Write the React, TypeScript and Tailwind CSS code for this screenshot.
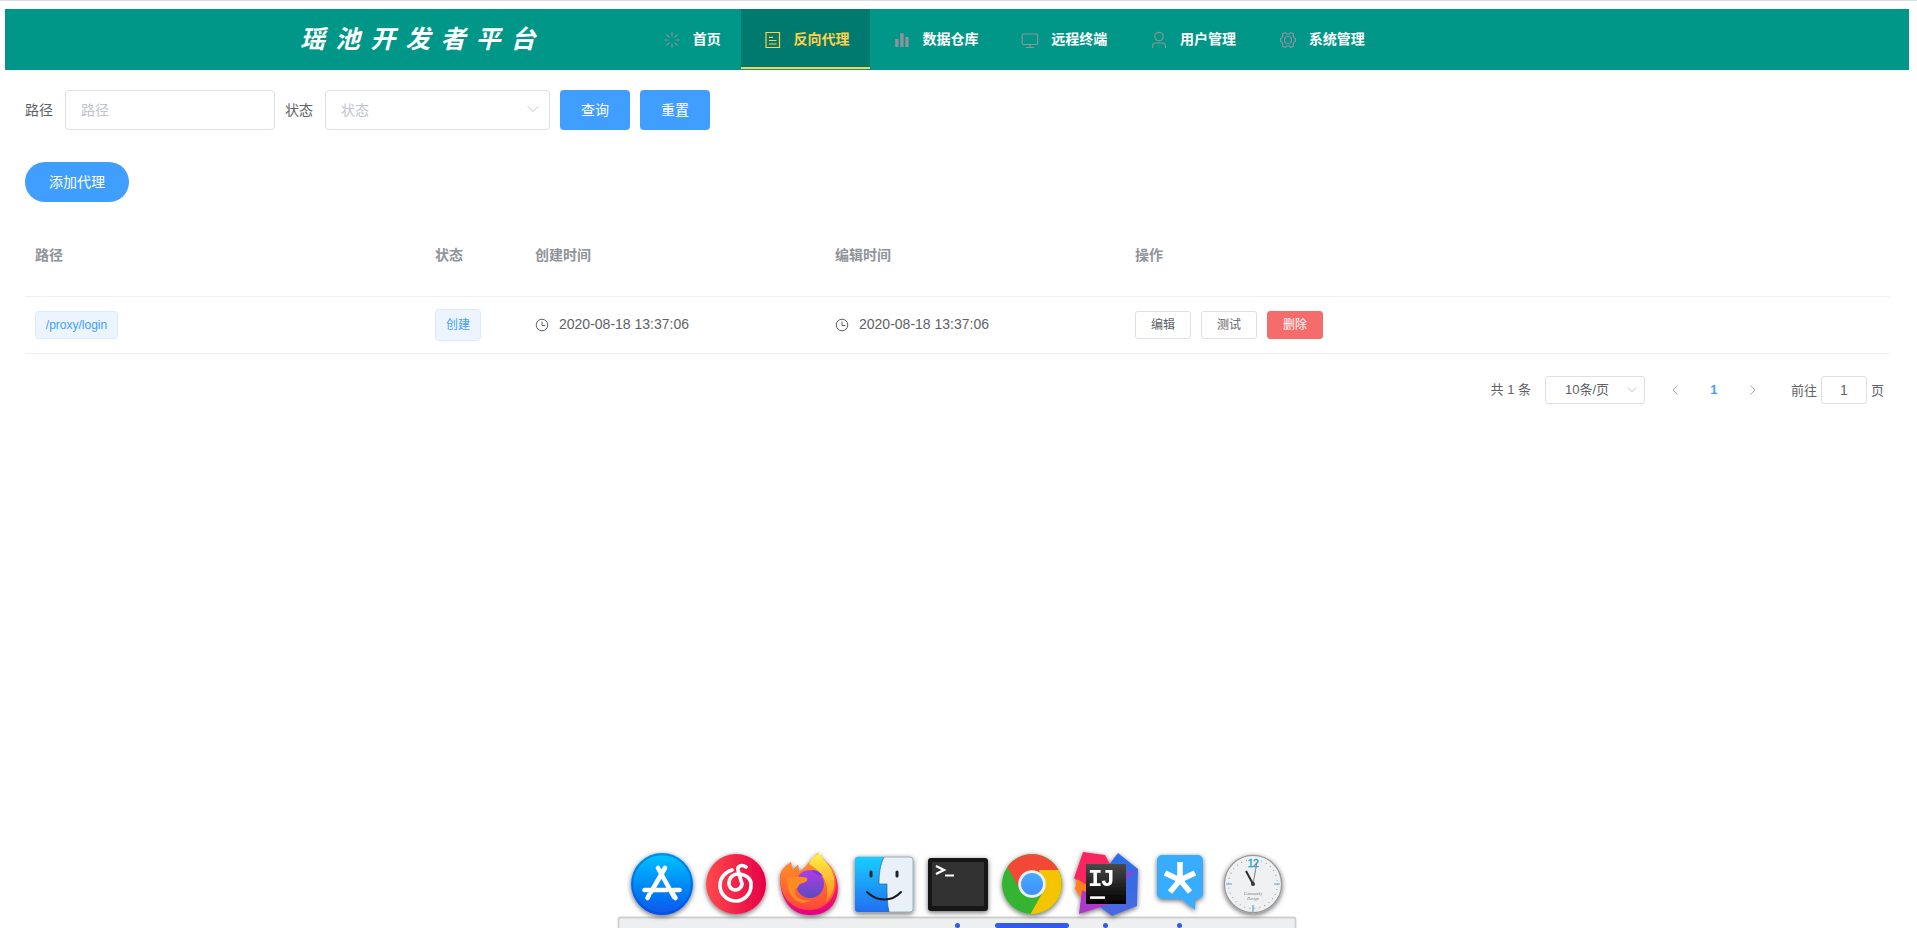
import type { ReactNode } from "react";

const Loading = () => (
  <svg viewBox="0 0 1024 1024" className="h-[18px] w-[18px]" fill="none" stroke="currentColor" strokeWidth="68" strokeLinecap="round">
    <path d="M512 95v190M512 738v190M95 512h190M738 512h190M217 217l135 135M672 672l135 135M217 807l135-135M672 352l135-135" />
  </svg>
);
const Tickets = () => (
  <svg viewBox="0 0 18 18" className="h-[18px] w-[18px]" fill="none" stroke="currentColor" strokeWidth="1.2">
    <path d="M2 1.500h13.500v15H2zM5 6.400h4M5 9.500h7.500M5 13h7.500" />
  </svg>
);
const Bars = () => (
  <svg viewBox="0 0 18 18" className="h-[18px] w-[18px]" fill="currentColor">
    <path d="M2.2 8h3.3v8H2.200zM7.200 2.200h3.400V16H7.200zM12.300 6h3.300v10h-3.300z" />
  </svg>
);
const Monitor = () => (
  <svg viewBox="0 0 18 18" className="h-[18px] w-[18px]" fill="none" stroke="currentColor" strokeWidth="1.2">
    <rect x="1.2" y="3" width="15.500" height="10.500" rx="1.6" />
    <path d="M9 13.500v3M4.800 16.500h8.400" />
  </svg>
);
const User = () => (
  <svg viewBox="0 0 18 18" className="h-[18px] w-[18px]" fill="none" stroke="currentColor" strokeWidth="1.2">
    <circle cx="9" cy="5.600" r="4.200" />
    <path d="M2.600 17v-2.200a2.800 2.800 0 0 1 2.800-2.800h7.200a2.800 2.800 0 0 1 2.800 2.800V17" />
  </svg>
);
const Gear = () => (
  <svg viewBox="0 0 18 18" className="h-[18px] w-[18px]" fill="none" stroke="currentColor" strokeWidth="1.2" strokeLinejoin="round">
    <circle cx="9" cy="9" r="3.500" />
    <path d="M6.200 1.600a3.400 3.400 0 0 0 5.600 0l2.600 1.500a3.400 3.400 0 0 0 2.100 4.400v3a3.400 3.400 0 0 0-2.100 4.400l-2.600 1.500a3.400 3.400 0 0 0-5.600 0l-2.600-1.500a3.400 3.400 0 0 0-2.100-4.400v-3a3.400 3.400 0 0 0 2.100-4.400z" />
  </svg>
);
const Clock = () => (
  <svg viewBox="0 0 14 14" className="h-[14px] w-[14px]" fill="none" stroke="currentColor" strokeWidth="1">
    <circle cx="7" cy="7" r="5.800" />
    <path d="M7 3.500v4h3.300" />
  </svg>
);
const Chevron = ({ d, className = "" }: { d: string; className?: string }) => (
  <svg viewBox="0 0 14 14" className={"h-[14px] w-[14px] " + className} fill="none" stroke="currentColor" strokeWidth="1">
    <path d={d} />
  </svg>
);
const DOWN = "M1.8 4.200l5.200 5.400 5.200-5.400";

const NavItem = ({ icon, label, active = false }: { icon: ReactNode; label: string; active?: boolean }) => (
  <li
    className={
      "flex h-[60px] items-center border-b-2 px-5 text-[14px] font-bold " +
      (active ? "border-[#ffd04b] bg-[#007a6e] text-[#ffd04b]" : "border-transparent text-white")
    }
  >
    <span className={"mt-[3px] mr-[8.8px] flex w-6 justify-center " + (active ? "" : "text-[#909399]")}>{icon}</span>
    <span className="pt-[2px]">{label}</span>
  </li>
);

const Button = ({ children }: { children: ReactNode }) => (
  <button className="h-10 w-[70px] rounded bg-[#409eff] text-[14px] text-white">{children}</button>
);
const SmallButton = ({ children, danger = false }: { children: ReactNode; danger?: boolean }) => (
  <button
    className={
      "h-7 w-14 rounded-[3px] border text-[12px] leading-3 " +
      (danger ? "border-[#f56c6c] bg-[#f56c6c] text-white" : "border-[#dcdfe6] bg-white text-[#606266]")
    }
  >
    {children}
  </button>
);
const Time = ({ value }: { value: string }) => (
  <div className="flex w-[300px] items-center px-[10px] pb-px">
    <Clock />
    <span className="ml-[10px]">{value}</span>
  </div>
);

const AppStore = () => (
  <g>
    <circle cx="662" cy="44" r="31" fill="url(#store)" />
    <circle cx="662" cy="44" r="29.800" fill="none" stroke="#0648d8" strokeOpacity=".45" strokeWidth="2" />
    <g stroke="#fff" strokeWidth="4.600" strokeLinecap="round">
      <path d="M658 28l16 29M665 28L651 52M644.500 50h22M673 50h6.500M649 55l-1.500 3M673 54l2.500 4" />
    </g>
  </g>
);
const Music = () => (
  <g>
    <circle cx="736" cy="44" r="30" fill="url(#music)" />
    <path
      d="M732 30c-7 2-12 8-12 15a15.500 15.500 0 0 0 31 1c1-7-5-12-13-12-6 0-9 5-9 9a6.500 6.500 0 0 0 13 1l-4-14c-1-4 4-6 8-3"
      fill="none"
      stroke="#fff"
      strokeWidth="3.700"
      strokeLinecap="round"
    />
  </g>
);
const Firefox = () => (
  <g>
    <path d="M780 38c0-8 6-12 11-16l1 8 6-5 1 7c6-3 9-9 19-19 5 8 12 10 16 19 9 18 3 43-23 43-20 1-31-16-31-37z" fill="url(#foxlow)" />
    <path d="M780 38c0-8 6-12 11-16l1 8 6-5 1 7c6-3 9-9 19-19 5 8 12 10 16 19 7 23-8 38-24 38-18 0-30-13-30-32z" fill="url(#fox)" />
    <path d="M809 24c2-5 5-8 10-11 4 8 13 12 15 25 1 12-3 19-8 24 4-14 0-28-17-38z" fill="url(#flame)" />
    <circle cx="810" cy="44" r="14" fill="url(#globe)" />
    <path d="M787 38c7-1 12-2 20 0 2 4-5 5-7 6s-1 4-5 5c-2 8 7 13 16 11-12 8-24-3-24-22z" fill="#ff8b21" />
    <path d="M811 31c4-2 8 0 12 5l-5-1z" fill="#7838e4" />
  </g>
);
const Finder = () => (
  <g>
    <rect x="855" y="17" width="58" height="55" rx="3" fill="#e9f0f7" stroke="#879eb1" strokeWidth=".8" />
    <path d="M858 17h26c-4 8-5 17-5 27h8c0 10 0 20 2 28h-31a3 3 0 0 1-3-3V20a3 3 0 0 1 3-3z" fill="url(#finder)" />
    <path d="M884 17c-4 8-5 17-5 27h8c0 10 0 20 2 28" fill="none" stroke="#24527d" strokeWidth=".6" />
    <path d="M871 32v4M897 32v4" stroke="#1d252e" strokeWidth="3" strokeLinecap="round" />
    <path d="M867 52c10 10 25 10 34 0" fill="none" stroke="#181f27" strokeWidth="2" strokeLinecap="round" />
  </g>
);
const Terminal = () => (
  <g>
    <rect x="928" y="18" width="60" height="53" rx="3" fill="#191919" />
    <rect x="932" y="22" width="52" height="44" fill="#333" />
    <path d="M936 26l8 4-8 4M945 35.500h9" fill="none" stroke="#fff" strokeWidth="2.200" />
  </g>
);
const Chrome = () => (
  <g>
    <circle cx="1032" cy="44" r="30" fill="#35b333" />
    <path d="M1032 44l-24.500-17A30 30 0 0 1 1058.500 30z" fill="#f14a36" />
    <path d="M1058.300 30A30 30 0 0 1 1030.500 74L1044 50l-5-20z" fill="#f4c400" />
    <path d="M1007.500 27L1019 48l13-18z" fill="#f14a36" />
    <circle cx="1032" cy="44" r="13.800" fill="#eee" />
    <circle cx="1032" cy="44" r="11" fill="url(#chrome)" />
  </g>
);
const Idea = () => (
  <g>
    <path d="M1083 12l22 3 10 18-16 25-25-20z" fill="#f82761" />
    <path d="M1077 39l20 12-14 10-8-12z" fill="#ff7f1f" />
    <path d="M1118 13l20 16-1 37-25 10-27-20z" fill="url(#idea)" />
    <path d="M1138 29l-20 20-6-14z" fill="#7350d8" />
    <path d="M1082 50l28 14-31 10z" fill="#aa3ac7" />
    <rect x="1086" y="24" width="40" height="40" fill="url(#black)" />
    <path d="M1090 57.600h15" stroke="#fff" strokeWidth="2.600" />
    <text x="1088" y="45.500" fontFamily="Liberation Mono" fontWeight="700" fontSize="24" letterSpacing="-2" fill="#fff">IJ</text>
  </g>
);
const Star = () => (
  <g>
    <path d="M1162 15h36a5 5 0 0 1 5 5v34a5 5 0 0 1-5 5h-3v11l-14-11h-19a5 5 0 0 1-5-5V20a5 5 0 0 1 5-5z" fill="#38acff" />
    <path d="M1180 40V22M1180 40l-15-7M1180 40l15-7M1180 40l-10 12M1180 40l10 12" stroke="#fff" strokeWidth="5.500" />
  </g>
);
const WallClock = () => (
  <g>
    <circle cx="1253" cy="44" r="28.600" fill="#eff0f1" stroke="#999" strokeWidth="1.300" />
    <circle cx="1253" cy="44" r="24.500" fill="none" stroke="#8b8b8b" strokeWidth="1.100" strokeDasharray=".8 4.331" />
    <path d="M1226 44h6M1274 44h6M1253 65v7" stroke="#4aabd2" strokeWidth="1.200" />
    <text x="1253" y="27" textAnchor="middle" fontFamily="Liberation Sans" fontSize="11" fill="#269ecf" stroke="#269ecf" strokeWidth=".3" letterSpacing="-.8">12</text>
    <path d="M1253 44l4-22" stroke="#888" strokeWidth="1.100" />
    <path d="M1253 44l-7-13" stroke="#292d31" strokeWidth="2" />
    <circle cx="1253" cy="44" r="2" fill="#343434" />
    <text x="1253" y="55" textAnchor="middle" fontFamily="Liberation Serif" fontSize="4" fontStyle="italic" fill="#777">Community</text>
    <text x="1253" y="60" textAnchor="middle" fontFamily="Liberation Serif" fontSize="4" fontStyle="italic" fill="#777">Design</text>
  </g>
);

const Gradient = ({ id, from, to, horizontal = false }: { id: string; from: string; to: string; horizontal?: boolean }) => (
  <linearGradient id={id} x2={horizontal ? "1" : "0"} y2={horizontal ? "0" : "1"}>
    <stop stopColor={from} />
    <stop offset="1" stopColor={to} />
  </linearGradient>
);

const Dock = () => (
  <svg viewBox="610 0 700 88" className="ml-[609.5px] block h-[88px] w-[700px]">
    <defs>
      <Gradient id="store" from="#00c4ff" to="#0855ed" />
      <Gradient id="music" from="#ff4a4d" to="#e60046" horizontal />
      <Gradient id="fox" from="#ff9d22" to="#ff453c" />
      <Gradient id="foxlow" from="#ff4b25" to="#e60087" />
      <Gradient id="flame" from="#fff347" to="#ff8a1f" />
      <Gradient id="globe" from="#b13de8" to="#5b4bc0" />
      <Gradient id="finder" from="#18ceff" to="#226ef2" />
      <Gradient id="chrome" from="#43adff" to="#438ef9" />
      <Gradient id="idea" from="#286fe8" to="#4b68df" />
      <Gradient id="black" from="#494949" to="#000" />
      <filter id="shade" x="-20%" y="-20%" width="140%" height="150%">
        <feDropShadow dx="0" dy="1.500" stdDeviation="2.800" floodOpacity=".6" />
      </filter>
    </defs>
    <rect x="618.500" y="77.500" width="677" height="20" rx="2" fill="#eeeff0" stroke="#cfcfcf" strokeWidth="1.800" />
    <g fill="#315bed">
      <circle cx="957.500" cy="85.500" r="2.500" />
      <rect x="995" y="83" width="74" height="5" rx="2.500" />
      <circle cx="1105.500" cy="85.500" r="2.500" />
      <circle cx="1179.500" cy="85.500" r="2.500" />
    </g>
    {[AppStore, Music, Firefox, Finder, Terminal, Chrome, Idea, Star, WallClock].map((Icon, i) => (
      <g key={i} filter="url(#shade)">
        <Icon />
      </g>
    ))}
  </svg>
);

export default function App() {
  return (
    <div className="flex h-[928px] w-[1917px] flex-col overflow-hidden border-t border-[#dcdce0] bg-white font-['Liberation_Sans','Noto_Sans_CJK_SC',sans-serif] text-[14px] text-[#606266]">
      <header className="mt-2 mr-2 ml-[5px] flex h-[61px] shrink-0 bg-[#009688]">
        <h1 className="w-[635px] shrink-0 pt-[10px] pl-[295px] text-[25px] leading-[40px] font-bold tracking-[10.1px] whitespace-nowrap text-white italic">瑶池开发者平台</h1>
        <ul className="flex">
          <NavItem icon={<Loading />} label="首页" />
          <NavItem icon={<Tickets />} label="反向代理" active />
          <NavItem icon={<Bars />} label="数据仓库" />
          <NavItem icon={<Monitor />} label="远程终端" />
          <NavItem icon={<User />} label="用户管理" />
          <NavItem icon={<Gear />} label="系统管理" />
        </ul>
      </header>

      <main className="mr-[28px] ml-[25px] flex flex-col">
        <div className="mt-5 flex h-10 items-center">
          <span className="w-10">路径</span>
          <div className="flex h-10 w-[210px] items-center rounded border border-[#dcdfe6] px-[15px] text-[#c0c4cc]">路径</div>
          <span className="w-[50px] pl-[10px]">状态</span>
          <div className="mr-[10px] flex h-10 w-[225px] items-center justify-between rounded border border-[#dcdfe6] pr-[9px] pl-[15px] text-[#c0c4cc]">
            状态
            <Chevron d={DOWN} className="mb-[2px]" />
          </div>
          <div className="flex gap-[10px]">
            <Button>查询</Button>
            <Button>重置</Button>
          </div>
        </div>
        <button className="mt-8 h-10 w-[104px] rounded-full bg-[#409eff] text-white">添加代理</button>

        <section className="mt-[12px]">
          <div className="flex h-[83px] items-center border-b border-[#ebeef5] font-bold text-[#909399]">
            <div className="w-[400px] px-[10px]">路径</div>
            <div className="w-[100px] px-[10px]">状态</div>
            <div className="w-[300px] px-[10px]">创建时间</div>
            <div className="w-[300px] px-[10px]">编辑时间</div>
            <div className="px-[10px]">操作</div>
          </div>
          <div className="flex h-[57px] items-center border-b border-[#ebeef5]">
            <div className="w-[400px] px-[10px]">
              <span className="flex h-7 w-[83px] items-center justify-center rounded border border-[#d9ecff] bg-[#ecf5ff] text-[12px] text-[#409eff]">/proxy/login</span>
            </div>
            <div className="w-[100px] px-[10px]">
              <span className="flex h-8 w-[46px] items-center justify-center rounded border border-[#d9ecff] bg-[#ecf5ff] text-[12px] text-[#409eff]">创建</span>
            </div>
            <Time value="2020-08-18 13:37:06" />
            <Time value="2020-08-18 13:37:06" />
            <div className="flex gap-[10px] px-[10px]">
              <SmallButton>编辑</SmallButton>
              <SmallButton>测试</SmallButton>
              <SmallButton danger>删除</SmallButton>
            </div>
          </div>
        </section>

        <div className="mt-[22px] flex h-7 items-center justify-end pr-[5px] text-[13px]">
          <span className="mr-[14px]">共 1 条</span>
          <div className="mr-[23px] flex h-7 w-[100px] items-center justify-between rounded-[3px] border border-[#dcdfe6] pr-[5px] pl-[19px]">
            10条/页
            <Chevron d="M3 4.500l4 4.200 4-4.200" className="mb-px text-[#c0c4cc]" />
          </div>
          <Chevron d="M9.500 2.500L5 7l4.500 4.500" className="mb-px text-[#a8abb2]" />
          <span className="w-[64px] text-center font-bold text-[#409eff]">1</span>
          <Chevron d="M4.500 2.500L9 7l-4.500 4.500" className="mb-px text-[#a8abb2]" />
          <span className="ml-[31px] w-[30px] pt-[2px]">前往</span>
          <div className="flex h-7 w-[46px] items-center justify-center rounded-[3px] border border-[#dcdfe6] text-[14px]">1</div>
          <span className="ml-1 pt-[2px]">页</span>
        </div>
      </main>

      <footer className="mt-auto">
        <Dock />
      </footer>
    </div>
  );
}
